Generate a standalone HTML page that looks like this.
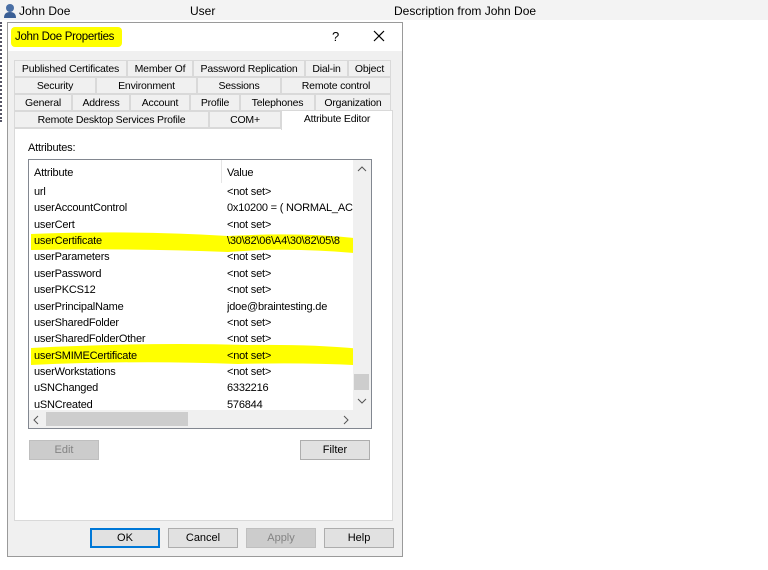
<!DOCTYPE html>
<html><head><style>
*{margin:0;padding:0;box-sizing:border-box}
body{width:768px;height:570px;background:#fff;font-family:"Liberation Sans",sans-serif;font-size:11px;color:#000;position:relative;overflow:hidden}
.a{position:absolute;white-space:nowrap}
.tab{position:absolute;height:17px;background:#f0f0f0;border:1px solid #d9d9d9;text-align:center;line-height:16px;font-size:10.5px;letter-spacing:-0.2px;overflow:hidden;white-space:nowrap}
.row{position:absolute;left:34px;height:16px;line-height:17px;letter-spacing:-0.2px;white-space:nowrap}
.val{position:absolute;left:227px;width:126px;overflow:hidden;height:16px;line-height:17px;letter-spacing:-0.2px;white-space:nowrap}
.btn{position:absolute;height:20px;width:70px;background:#e1e1e1;border:1px solid #adadad;text-align:center;line-height:19px;font-size:11px}
</style></head><body>
<div class="a" style="left:0;top:0;width:768px;height:20px;background:#f3f3f3"></div>
<svg class="a" style="left:3px;top:3px" width="15" height="16"><circle cx="7" cy="5" r="4" fill="#4a6fa5"/><path d="M1 15 Q1 9 7 9 Q13 9 13 15Z" fill="#3a5f95"/></svg>
<div class="a" style="left:19px;top:4px;font-size:12px">John Doe</div>
<div class="a" style="left:190px;top:4px;font-size:12px">User</div>
<div class="a" style="left:394px;top:4px;font-size:12px">Description from John Doe</div>
<div class="a" style="left:0;top:22px;width:4px;height:100px;border-left:2px dotted #556;"></div>

<div class="a" style="left:7px;top:22px;width:396px;height:535px;background:#f0f0f0;border:1px solid #9a9a9a"></div>
<div class="a" style="left:8px;top:23px;width:394px;height:28px;background:#fff"></div>
<div class="a" style="left:11px;top:27px;width:111px;height:20px;background:#ffff00;border-radius:4px"></div>
<div class="a" style="left:15px;top:31px;font-size:11.5px;letter-spacing:-0.3px">John Doe Properties</div>
<div class="a" style="left:332px;top:29px;font-size:13px">?</div>
<svg class="a" style="left:373px;top:30px" width="12" height="12"><path d="M1 1L11 11M11 1L1 11" stroke="#000" stroke-width="1.2"/></svg>

<div class="tab" style="left:14px;top:60px;width:113px">Published Certificates</div>
<div class="tab" style="left:127px;top:60px;width:66px">Member Of</div>
<div class="tab" style="left:193px;top:60px;width:112px">Password Replication</div>
<div class="tab" style="left:305px;top:60px;width:43px">Dial-in</div>
<div class="tab" style="left:348px;top:60px;width:43px">Object</div>
<div class="tab" style="left:14px;top:77px;width:82px">Security</div>
<div class="tab" style="left:96px;top:77px;width:101px">Environment</div>
<div class="tab" style="left:197px;top:77px;width:84px">Sessions</div>
<div class="tab" style="left:281px;top:77px;width:110px">Remote control</div>
<div class="tab" style="left:14px;top:94px;width:58px">General</div>
<div class="tab" style="left:72px;top:94px;width:58px">Address</div>
<div class="tab" style="left:130px;top:94px;width:60px">Account</div>
<div class="tab" style="left:190px;top:94px;width:50px">Profile</div>
<div class="tab" style="left:240px;top:94px;width:75px">Telephones</div>
<div class="tab" style="left:315px;top:94px;width:76px">Organization</div>
<div class="tab" style="left:14px;top:111px;width:195px">Remote Desktop Services Profile</div>
<div class="tab" style="left:209px;top:111px;width:72px">COM+</div>

<div class="a" style="left:14px;top:128px;width:379px;height:393px;background:#fff;border:1px solid #d9d9d9"></div>
<div class="tab" style="left:281px;top:110px;width:112px;height:20px;background:#fff;border-bottom:none;line-height:17px">Attribute Editor</div>

<div class="a" style="left:28px;top:142px;letter-spacing:-0.2px">Attributes:</div>
<div class="a" style="left:28px;top:159px;width:344px;height:270px;border:1px solid #828790;background:#fff"></div>
<div class="a" style="left:221px;top:160px;width:1px;height:23px;background:#e5e5e5"></div>
<div class="a" style="left:34px;top:167px;letter-spacing:-0.2px">Attribute</div>
<div class="a" style="left:227px;top:167px;letter-spacing:-0.2px">Value</div>

<svg class="a" style="left:28px;top:232px" width="330" height="140">
<path d="M3 2 Q110 -2 200 4 Q270 0 326 6 L326 21 Q260 15 200 20 Q110 16 3 18Z" fill="#ffff00"/>
<path d="M3 116 Q120 110 220 113 Q290 112 344 118 L344 134 Q280 130 210 132 Q110 128 3 133Z" fill="#ffff00"/>
</svg>

<div class="row" style="top:184px">url</div><div class="val" style="top:184px">&lt;not set&gt;</div>
<div class="row" style="top:200px">userAccountControl</div><div class="val" style="top:200px">0x10200 = ( NORMAL_ACC</div>
<div class="row" style="top:217px">userCert</div><div class="val" style="top:217px">&lt;not set&gt;</div>
<div class="row" style="top:233px">userCertificate</div><div class="val" style="top:233px">\30\82\06\A4\30\82\05\8</div>
<div class="row" style="top:249px">userParameters</div><div class="val" style="top:249px">&lt;not set&gt;</div>
<div class="row" style="top:266px">userPassword</div><div class="val" style="top:266px">&lt;not set&gt;</div>
<div class="row" style="top:282px">userPKCS12</div><div class="val" style="top:282px">&lt;not set&gt;</div>
<div class="row" style="top:299px">userPrincipalName</div><div class="val" style="top:299px">jdoe@braintesting.de</div>
<div class="row" style="top:315px">userSharedFolder</div><div class="val" style="top:315px">&lt;not set&gt;</div>
<div class="row" style="top:331px">userSharedFolderOther</div><div class="val" style="top:331px">&lt;not set&gt;</div>
<div class="row" style="top:348px">userSMIMECertificate</div><div class="val" style="top:348px">&lt;not set&gt;</div>
<div class="row" style="top:364px">userWorkstations</div><div class="val" style="top:364px">&lt;not set&gt;</div>
<div class="row" style="top:380px">uSNChanged</div><div class="val" style="top:380px">6332216</div>
<div class="row" style="top:397px">uSNCreated</div><div class="val" style="top:397px">576844</div>

<div class="a" style="left:353px;top:160px;width:18px;height:250px;background:#f0f0f0"></div>
<svg class="a" style="left:357px;top:166px" width="10" height="6"><path d="M1 5L5 1L9 5" stroke="#555" fill="none"/></svg>
<div class="a" style="left:354px;top:374px;width:15px;height:16px;background:#cdcdcd"></div>
<svg class="a" style="left:357px;top:398px" width="10" height="6"><path d="M1 1L5 5L9 1" stroke="#555" fill="none"/></svg>
<div class="a" style="left:29px;top:410px;width:342px;height:18px;background:#f0f0f0"></div>
<svg class="a" style="left:33px;top:415px" width="6" height="10"><path d="M5 1L1 5L5 9" stroke="#555" fill="none"/></svg>
<div class="a" style="left:46px;top:412px;width:142px;height:14px;background:#cdcdcd"></div>
<svg class="a" style="left:343px;top:415px" width="6" height="10"><path d="M1 1L5 5L1 9" stroke="#555" fill="none"/></svg>

<div class="btn" style="left:29px;top:440px;background:#ccc;border-color:#bfbfbf;color:#838383">Edit</div>
<div class="btn" style="left:300px;top:440px">Filter</div>

<div class="btn" style="left:90px;top:528px;border:2px solid #0078d7;line-height:17px">OK</div>
<div class="btn" style="left:168px;top:528px">Cancel</div>
<div class="btn" style="left:246px;top:528px;background:#ccc;border-color:#bfbfbf;color:#838383">Apply</div>
<div class="btn" style="left:324px;top:528px">Help</div>
</body></html>
